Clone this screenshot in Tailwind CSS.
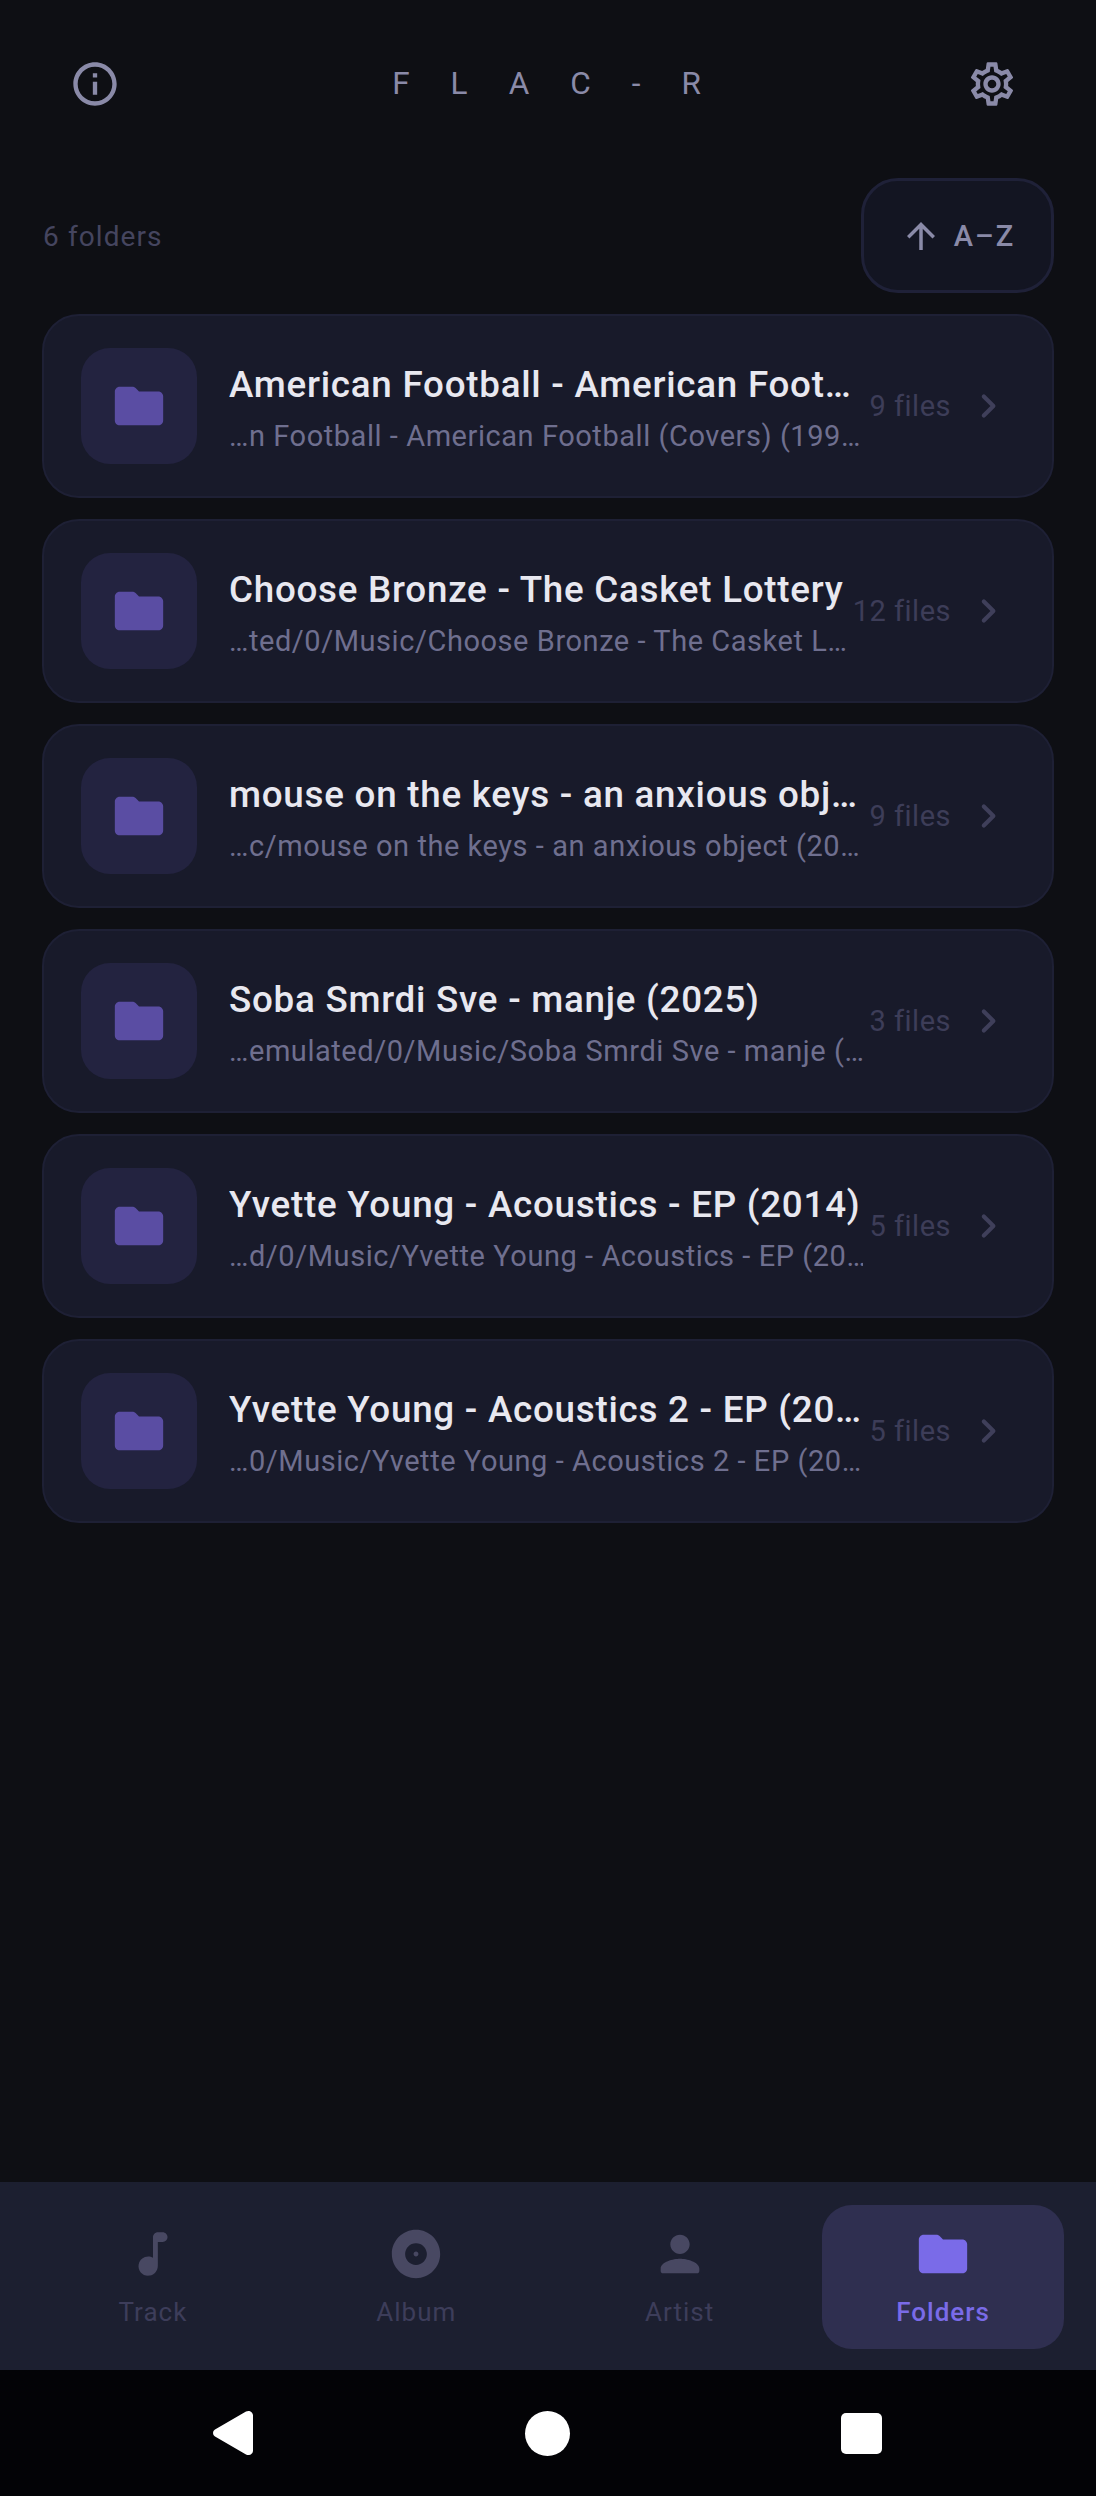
<!DOCTYPE html>
<html lang="en">
<head>
  <meta charset="UTF-8">
  <title>FLAC-R Folders</title>
  <meta name="viewport" content="width=device-width, initial-scale=1">
  <script src="https://cdn.jsdelivr.net/npm/@tailwindcss/browser@4"></script>
</head>
<body class="bg-[#0e0f14] font-['Roboto',sans-serif]">
  <div class="flex flex-col h-[2496px] w-[1096px] overflow-hidden">

    <!-- Header -->
    <header class="flex items-center justify-between h-[168px] shrink-0 pl-[69px] pr-[78px]">
      <svg class="w-[52px] h-[52px] fill-[#8a8aa8]" viewBox="0 0 24 24"><path d="M11 7h2v2h-2zm0 4h2v6h-2zm1-9C6.48 2 2 6.48 2 12s4.48 10 10 10 10-4.48 10-10S17.52 2 12 2zm0 18c-4.41 0-8-3.59-8-8s3.59-8 8-8 8 3.59 8 8-3.59 8-8 8z"/></svg>
      <span class="text-[31.5px] tracking-[41px] leading-none text-[#8a8aa8] -mr-[47px]">FLAC-R</span>
      <svg class="w-[52px] h-[52px] fill-[#8a8aa8]" viewBox="0 0 24 24"><path d="M19.43 12.98c.04-.32.07-.64.07-.98 0-.34-.03-.66-.07-.98l2.11-1.65c.19-.15.24-.42.12-.64l-2-3.46c-.09-.16-.26-.25-.44-.25-.06 0-.12.01-.17.03l-2.49 1c-.52-.4-1.08-.73-1.69-.98l-.38-2.65C14.46 2.18 14.25 2 14 2h-4c-.25 0-.46.18-.49.42l-.38 2.65c-.61.25-1.17.59-1.69.98l-2.49-1c-.06-.02-.12-.03-.18-.03-.17 0-.34.09-.43.25l-2 3.46c-.13.22-.07.49.12.64l2.11 1.65c-.04.32-.07.65-.07.98 0 .33.03.66.07.98l-2.11 1.65c-.19.15-.24.42-.12.64l2 3.46c.09.16.26.25.44.25.06 0 .12-.01.17-.03l2.49-1c.52.4 1.08.73 1.69.98l.38 2.65c.03.24.24.42.49.42h4c.25 0 .46-.18.49-.42l.38-2.65c.61-.25 1.17-.59 1.69-.98l2.49 1c.06.02.12.03.18.03.17 0 .34-.09.43-.25l2-3.46c.12-.22.07-.49-.12-.64l-2.11-1.65zm-1.98-1.71c.04.31.05.52.05.73 0 .21-.02.43-.05.73l-.14 1.13.89.7 1.08.84-.7 1.21-1.27-.51-1.04-.42-.9.68c-.43.32-.84.56-1.25.73l-1.06.43-.16 1.13-.2 1.35h-1.4l-.19-1.35-.16-1.13-1.06-.43c-.43-.18-.83-.41-1.23-.71l-.91-.7-1.06.43-1.27.51-.7-1.21 1.08-.84.89-.7-.14-1.13c-.03-.31-.05-.54-.05-.74s.02-.43.05-.73l.14-1.13-.89-.7-1.08-.84.7-1.21 1.27.51 1.04.42.9-.68c.43-.32.84-.56 1.25-.73l1.06-.43.16-1.13.2-1.35h1.39l.19 1.35.16 1.13 1.06.43c.43.18.83.41 1.23.71l.91.7 1.06-.43 1.27-.51.7 1.21-1.07.85-.89.7.14 1.13zM12 8c-2.21 0-4 1.79-4 4s1.79 4 4 4 4-1.79 4-4-1.79-4-4-4zm0 6c-1.1 0-2-.9-2-2s.9-2 2-2 2 .9 2 2-.9 2-2 2z"/></svg>
    </header>

    <!-- Count + sort -->
    <div class="flex items-center justify-between shrink-0 pl-[43px] pr-[42px] pt-[10px]">
      <span class="text-[28px] tracking-[1.1px] mt-[2px] text-[#45455f]">6 folders</span>
      <button class="flex items-center justify-center gap-[12px] w-[193px] h-[115px] rounded-[37px] bg-[#131522] border-[3px] border-[#1f2138]">
        <svg class="w-[42px] h-[42px] fill-[#8a8aa8]" viewBox="0 0 24 24"><path d="M4 12l1.41 1.41L11 7.83V20h2V7.83l5.58 5.59L20 12l-8-8-8 8z"/></svg>
        <span class="text-[29px] font-medium tracking-[2px] mt-[2px] text-[#8a8aa8]">A–Z</span>
      </button>
    </div>

    <!-- Folder list -->
    <main id="list" class="flex flex-col gap-[21px] px-[42px] pt-[21px] flex-1"></main>

    <!-- Bottom nav -->
    <nav class="flex gap-[21.5px] h-[188px] shrink-0 px-[32px] pt-[23px] bg-[#1c1f30]">
      <div class="flex flex-col items-center w-[242px] h-[144px] pt-[20px] text-[#3d3d5a]">
        <svg class="w-[58px] h-[58px] fill-[#484862]" viewBox="0 0 24 24"><path d="M12 5v8.55c-.94-.54-2.1-.75-3.33-.32-1.34.47-2.37 1.67-2.61 3.07-.46 2.74 1.86 5.08 4.59 4.64 1.96-.31 3.35-2.11 3.35-4.1V7h2c1.1 0 2-.9 2-2s-.9-2-2-2h-2c-1.1 0-2 .9-2 2z"/></svg>
        <span class="text-[26px] tracking-[1px] leading-[32px] mt-[13px]">Track</span>
      </div>
      <div class="flex flex-col items-center w-[242px] h-[144px] pt-[20px] text-[#3d3d5a]">
        <svg class="w-[58px] h-[58px] fill-[#484862]" viewBox="0 0 24 24"><path d="M12 2C6.48 2 2 6.48 2 12s4.48 10 10 10 10-4.48 10-10S17.52 2 12 2zm0 14.5c-2.49 0-4.5-2.01-4.5-4.5S9.51 7.5 12 7.5s4.5 2.01 4.5 4.5-2.01 4.5-4.5 4.5zm0-5.5c-.55 0-1 .45-1 1s.45 1 1 1 1-.45 1-1-.45-1-1-1z"/></svg>
        <span class="text-[26px] tracking-[1px] leading-[32px] mt-[13px]">Album</span>
      </div>
      <div class="flex flex-col items-center w-[242px] h-[144px] pt-[20px] text-[#3d3d5a]">
        <svg class="w-[58px] h-[58px] fill-[#484862]" viewBox="0 0 24 24"><path d="M12 12c2.21 0 4-1.79 4-4s-1.79-4-4-4-4 1.79-4 4 1.79 4 4 4zm0 2c-2.67 0-8 1.34-8 4v1c0 .55.45 1 1 1h14c.55 0 1-.45 1-1v-1c0-2.66-5.33-4-8-4z"/></svg>
        <span class="text-[26px] tracking-[1px] leading-[32px] mt-[13px]">Artist</span>
      </div>
      <div class="flex flex-col items-center w-[242px] h-[144px] pt-[20px] rounded-[30px] bg-[#2f2f50] text-[#7a6be8]">
        <svg class="w-[58px] h-[58px] fill-[#7a6be8]" viewBox="0 0 24 24"><path d="M10.59 4.59C10.21 4.21 9.7 4 9.17 4H4c-1.1 0-2 .9-2 2v12c0 1.1.9 2 2 2h16c1.1 0 2-.9 2-2V8c0-1.1-.9-2-2-2h-8l-1.41-1.41z"/></svg>
        <span class="text-[26px] font-medium tracking-[1px] leading-[32px] mt-[13px]">Folders</span>
      </div>
    </nav>

    <!-- Android system bar -->
    <div class="relative flex items-center justify-between h-[126px] shrink-0 pl-[212px] pr-[214px] bg-[#030306]">
      <svg class="w-[42px] h-[46px] fill-white" viewBox="0 0 42 46"><path d="M3 19.6 34 1.6c3-1.7 7 .3 7 4v34.8c0 3.7-4 5.7-7 4L3 26.4c-2.600-1.500-2.600-5.300 0-6.800z"/></svg>
      <div class="w-[45px] h-[45px] rounded-full bg-white"></div>
      <div class="w-[41px] h-[41px] rounded-[5px] bg-white"></div>
    </div>
  </div>

  <script>
    const folders = [
      { name: 'American Football - American Football (Covers) (1999)', path: '…n Football - American Football (Covers) (199…', files: '9 files' },
      { name: 'Choose Bronze - The Casket Lottery', path: '…ted/0/Music/Choose Bronze - The Casket L…', files: '12 files' },
      { name: 'mouse on the keys - an anxious object (2009)', path: '…c/mouse on the keys - an anxious object (20…', files: '9 files' },
      { name: 'Soba Smrdi Sve - manje (2025)', path: '…emulated/0/Music/Soba Smrdi Sve - manje (…', files: '3 files' },
      { name: 'Yvette Young - Acoustics - EP (2014)', path: '…d/0/Music/Yvette Young - Acoustics - EP (20…', files: '5 files' },
      { name: 'Yvette Young - Acoustics 2 - EP (2015)', path: '…0/Music/Yvette Young - Acoustics 2 - EP (20…', files: '5 files' }
    ];

    document.getElementById('list').innerHTML = folders.map(f => `
      <article class="flex items-center h-[184px] shrink-0 pl-[37px] pr-[39px] rounded-[37px] bg-[#181a2a] border-[2px] border-[#1e2035]">
        <div class="flex items-center justify-center w-[116px] h-[116px] shrink-0 rounded-[29px] bg-[#232340]">
          <svg class="w-[58px] h-[58px] fill-[#5a4da3]" viewBox="0 0 24 24"><path d="M10.59 4.59C10.21 4.21 9.7 4 9.17 4H4c-1.1 0-2 .9-2 2v12c0 1.1.9 2 2 2h16c1.1 0 2-.9 2-2V8c0-1.1-.9-2-2-2h-8l-1.41-1.41z"/></svg>
        </div>
        <div class="flex flex-col flex-1 min-w-0 ml-[32px] pt-[3px]">
          <span class="truncate text-[36.75px] font-medium tracking-[0.75px] leading-[48px] text-[#e8e8f0]">${f.name}</span>
          <span class="whitespace-nowrap overflow-hidden text-[29px] tracking-[0.55px] leading-[38px] mt-[8px] text-[#6f6f8f]">${f.path}</span>
        </div>
        <span class="shrink-0 ml-[6px] mt-[2px] text-[29px] tracking-[0.5px] text-[#3d3d58]">${f.files}</span>
        <svg class="w-[50px] h-[50px] ml-[12px] shrink-0 fill-[#3f3f5a]" viewBox="0 0 24 24"><path d="M9.29 6.71c-.39.39-.39 1.02 0 1.41L13.17 12l-3.88 3.88c-.39.39-.39 1.02 0 1.41.39.39 1.02.39 1.41 0l4.59-4.59c.39-.39.39-1.02 0-1.41L10.7 6.7c-.38-.38-1.02-.38-1.41.01z"/></svg>
      </article>`).join('');
  </script>
</body>
</html>
